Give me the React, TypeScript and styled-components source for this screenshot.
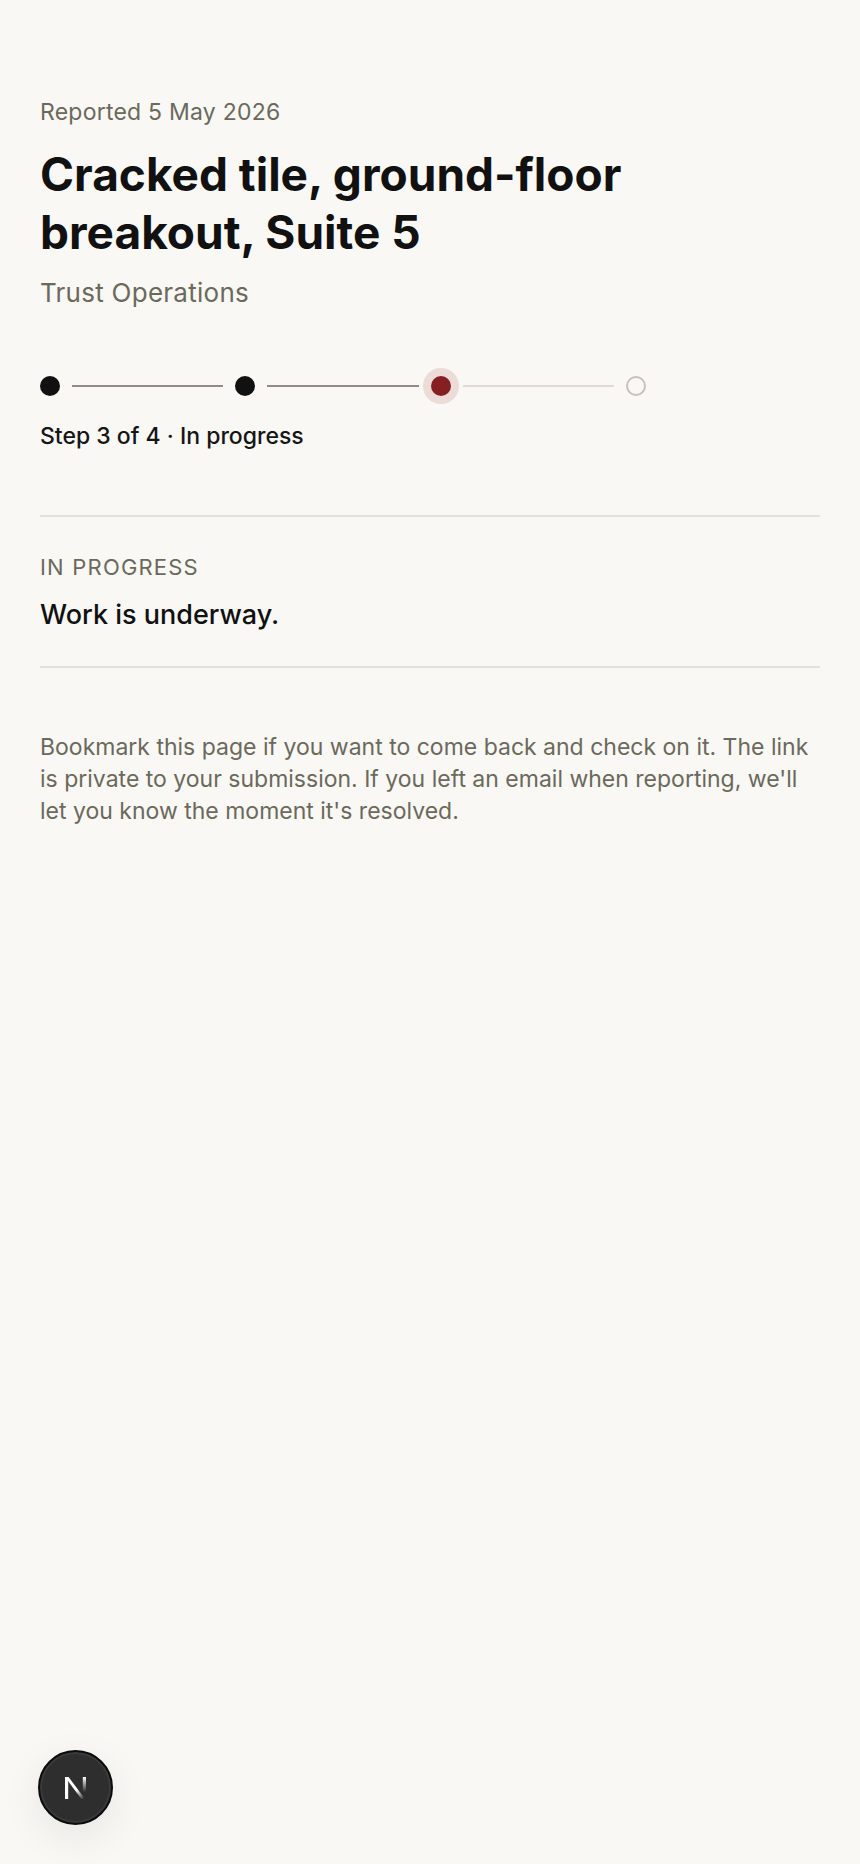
import React from "react";
import styled, { createGlobalStyle } from "styled-components";

const GlobalStyle = createGlobalStyle`
  html, body {
    margin: 0;
    padding: 0;
    background: #f9f8f5;
  }
  body {
    font-family: Inter, "Noto Sans", sans-serif;
    color: #111111;
    -webkit-font-smoothing: antialiased;
  }
`;

const Page = styled.main`
  min-height: 1864px;
  box-sizing: border-box;
  padding: 96px 40px 0;
`;

const Meta = styled.div`
  font-size: 23px;
  line-height: 32px;
  letter-spacing: 0.01em;
  color: #6b695b;
`;

const Title = styled.h1`
  margin: 17px 0 0;
  font-size: 46px;
  line-height: 58px;
  font-weight: 700;
  letter-spacing: 0;
  color: #111111;
`;

const Owner = styled.div`
  margin-top: 16px;
  font-size: 26px;
  line-height: 32px;
  letter-spacing: 0.01em;
  color: #6b695b;
`;

const Steps = styled.ol`
  list-style: none;
  margin: 59px 0 0;
  padding: 0;
  display: flex;
  align-items: center;
  gap: 12px;
  width: 606px;
  height: 36px;
`;

type StepState = "done" | "current" | "todo";

const Dot = styled.li<{ $state: StepState }>`
  flex: none;
  width: 20px;
  height: 20px;
  box-sizing: border-box;
  border-radius: 50%;
  background: ${(p) =>
    p.$state === "done" ? "#111111" : p.$state === "current" ? "#861f22" : "transparent"};
  border: ${(p) => (p.$state === "todo" ? "2px solid #c6c3bc" : "none")};
  box-shadow: ${(p) => (p.$state === "current" ? "0 0 0 8px #ecdcd8" : "none")};
`;

const Connector = styled.li<{ $done: boolean }>`
  flex: 1;
  height: 2px;
  background: ${(p) => (p.$done ? "#8f8c85" : "#dedbd4")};
`;

const StepLabel = styled.div`
  margin-top: 16px;
  font-size: 23px;
  line-height: 32px;
  font-weight: 500;
  color: #151515;
`;

const StatusBlock = styled.section`
  margin-top: 63px;
  padding: 36px 0 33px;
  border-top: 2px solid #e3e1dc;
  border-bottom: 2px solid #e3e1dc;
`;

const StatusKicker = styled.div`
  font-size: 22px;
  line-height: 28px;
  letter-spacing: 1.2px;
  color: #6b695b;
`;

const StatusText = styled.div`
  margin-top: 16px;
  font-size: 27px;
  line-height: 36px;
  font-weight: 500;
  color: #111111;
`;

const Note = styled.p`
  margin: 63px 0 0;
  font-size: 23px;
  line-height: 32px;
  color: #6b695b;
`;

const DevBadge = styled.button`
  position: fixed;
  left: 38px;
  bottom: 39px;
  width: 75px;
  height: 75px;
  padding: 0;
  border-radius: 50%;
  border: 2px solid #0c0c0c;
  background: #2e2e2e;
  box-shadow: inset 0 0 0 2px #3a3a3a, 0 12px 40px rgba(0, 0, 0, 0.08);
  display: flex;
  align-items: center;
  justify-content: center;
  cursor: pointer;
`;

const steps: StepState[] = ["done", "done", "current", "todo"];

const NextMark = () => (
  <svg width="26" height="24" viewBox="0 0 26 24" fill="none">
    <defs>
      <linearGradient id="nDiag" x1="6" y1="2" x2="22" y2="22" gradientUnits="userSpaceOnUse">
        <stop offset="0.55" stopColor="#ffffff" />
        <stop offset="1" stopColor="#ffffff" stopOpacity="0" />
      </linearGradient>
      <linearGradient id="nRight" x1="21" y1="1" x2="21" y2="16" gradientUnits="userSpaceOnUse">
        <stop offset="0" stopColor="#ffffff" />
        <stop offset="1" stopColor="#ffffff" stopOpacity="0" />
      </linearGradient>
    </defs>
    <rect x="2" y="1" width="3.2" height="22" fill="#ffffff" />
    <polygon points="2,1 5.6,1 22,23 18.4,23" fill="url(#nDiag)" />
    <rect x="19.8" y="1" width="3.2" height="15" fill="url(#nRight)" />
  </svg>
);

export default function App() {
  return (
    <>
      <GlobalStyle />
      <Page>
        <Meta>Reported 5 May 2026</Meta>
        <Title>
          Cracked tile, ground-floor
          <br />
          breakout, Suite 5
        </Title>
        <Owner>Trust Operations</Owner>

        <Steps>
          {steps.map((s, i) => (
            <React.Fragment key={i}>
              {i > 0 && <Connector $done={steps[i] !== "todo"} />}
              <Dot $state={s} />
            </React.Fragment>
          ))}
        </Steps>
        <StepLabel>Step 3 of 4 · In progress</StepLabel>

        <StatusBlock>
          <StatusKicker>IN PROGRESS</StatusKicker>
          <StatusText>Work is underway.</StatusText>
        </StatusBlock>

        <Note>
          Bookmark this page if you want to come back and check on it. The link is private
          to your submission. If you left an email when reporting, we'll let you know the
          moment it's resolved.
        </Note>
      </Page>
      <DevBadge aria-label="Open dev tools">
        <NextMark />
      </DevBadge>
    </>
  );
}
